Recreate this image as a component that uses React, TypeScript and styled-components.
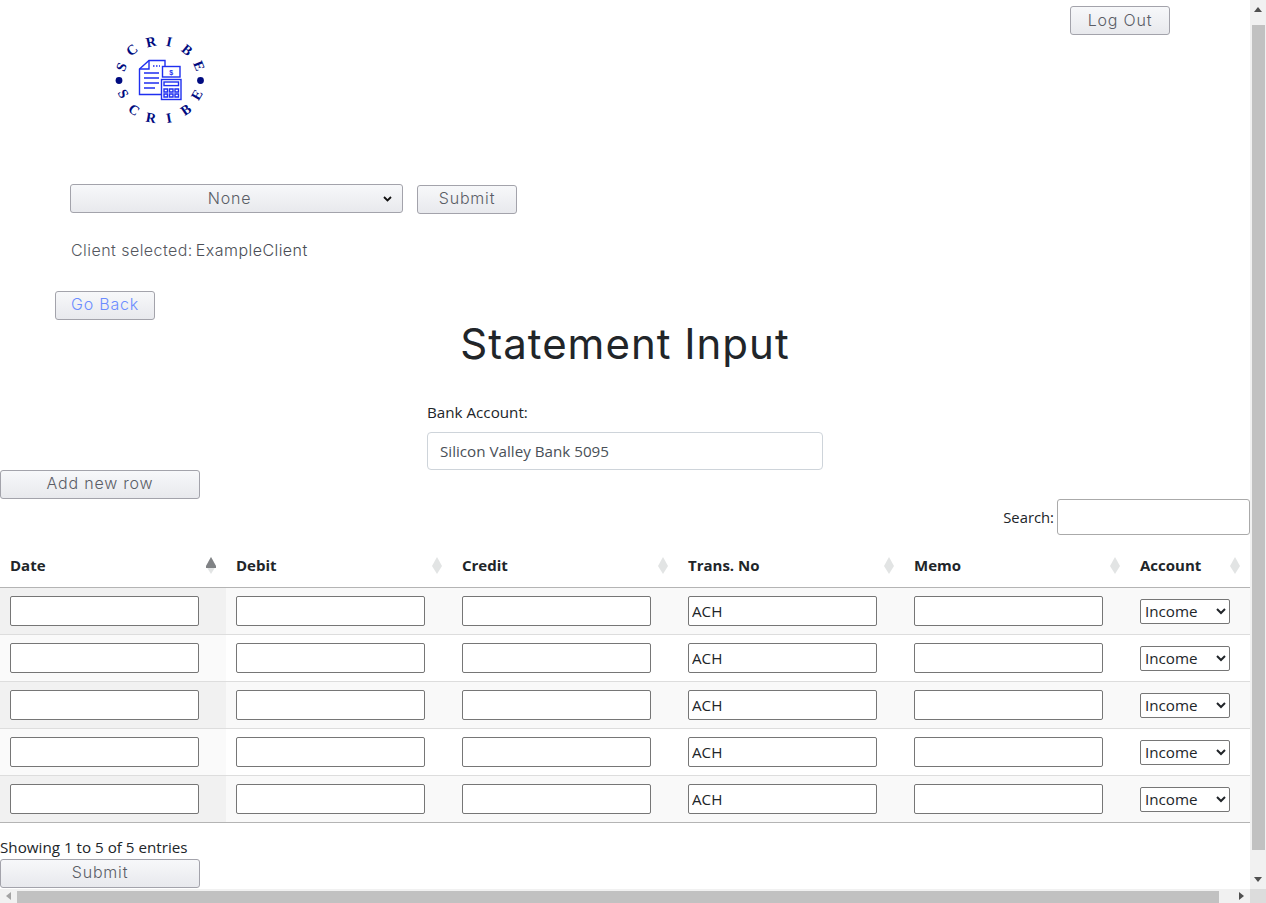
import { FC } from 'react';
import styled, { createGlobalStyle } from 'styled-components';

const columns = ['Date', 'Debit', 'Credit', 'Trans. No', 'Memo', 'Account'];
const rows = [1, 2, 3, 4, 5];

const topLetters = [
  { c: 'S', x: 21.5, y: 37, r: -68 },
  { c: 'C', x: 32, y: 20, r: -40 },
  { c: 'R', x: 51, y: 12, r: -12 },
  { c: 'I', x: 69, y: 12, r: 12 },
  { c: 'B', x: 87, y: 20, r: 40 },
  { c: 'E', x: 99, y: 36, r: 68 },
];
const bottomLetters = [
  { c: 'S', x: 23, y: 64, r: 60 },
  { c: 'C', x: 34, y: 80, r: 35 },
  { c: 'R', x: 51, y: 88, r: 10 },
  { c: 'I', x: 69, y: 88, r: -10 },
  { c: 'B', x: 86, y: 80, r: -35 },
  { c: 'E', x: 97, y: 65, r: -60 },
];

const chevron =
  "url(\"data:image/svg+xml,%3Csvg xmlns='http://www.w3.org/2000/svg' viewBox='0 0 9 6'%3E%3Cpath d='M1 1l3.5 3.5L8 1' fill='none' stroke='%23111' stroke-width='1.8'/%3E%3C/svg%3E\")";

const Logo: FC = () => (
  <LogoSvg viewBox="0 0 120 100">
    {[...topLetters, ...bottomLetters].map((l, i) => (
      <LogoLetter
        key={i}
        x={l.x}
        y={l.y}
        textAnchor="middle"
        dominantBaseline="central"
        transform={`rotate(${l.r} ${l.x} ${l.y})`}
      >
        {l.c}
      </LogoLetter>
    ))}
    <circle cx="19" cy="50.5" r="3.4" fill="#000b80" />
    <circle cx="100.5" cy="50.5" r="3.4" fill="#000b80" />
    <g fill="none" stroke="#1f2ff0" strokeWidth="1.4">
      <path d="M61 64.5H39.5V39L49 30.5H65V36" />
      <path d="M49 30.5V39H39.5" />
      <path d="M44 43H59M44 48H59M44 53H59M44 58H55" />
      <path d="M53 36H60" strokeDasharray="1.5 1.5" />
      <rect x="62.5" y="36.5" width="17.5" height="10.5" />
      <rect x="61.5" y="49.5" width="19.5" height="20" fill="#fff" />
      <rect x="64" y="52" width="14.5" height="3.6" />
      <path d="M64 59h3.5v3h-3.5zM69.5 59h3.5v3h-3.5zM75 59h3.5v3h-3.5zM64 64h3.5v3h-3.5zM69.5 64h3.5v3h-3.5zM75 64h3.5v3h-3.5z" />
    </g>
    <BillSign x="71.2" y="42" textAnchor="middle" dominantBaseline="central">
      $
    </BillSign>
  </LogoSvg>
);

const SortIcon: FC<{ active?: boolean }> = ({ active }) => (
  <SortSvg viewBox="0 0 10 17">
    <path d="M5 0L10 9L5 17L0 9Z" fill="#e2e4e4" />
    {active && <path d="M5 0L10 9V11H0V9Z" fill="#808285" />}
  </SortSvg>
);

export default function App() {
  return (
    <Page>
      <GlobalStyle />
      <Header>
        <Logo />
        <LogoutButton>Log Out</LogoutButton>
      </Header>

      <ClientForm>
        <ClientSelect>
          <option>None</option>
        </ClientSelect>
        <SmallButton>Submit</SmallButton>
      </ClientForm>
      <ClientLine>
        <span>Client selected:</span>
        <ClientName>ExampleClient</ClientName>
      </ClientLine>

      <BackButton>Go Back</BackButton>
      <Title>Statement Input</Title>

      <BankBlock>
        <BankLabel>Bank Account:</BankLabel>
        <BankInput defaultValue="Silicon Valley Bank 5095" />
      </BankBlock>

      <WideButton>Add new row</WideButton>

      <SearchRow>
        Search:
        <SearchInput />
      </SearchRow>

      <Table>
        <thead>
          <tr>
            {columns.map((c, i) => (
              <HeadCell key={c} $wide={i < 5}>
                {c}
                <SortIcon active={i === 0} />
              </HeadCell>
            ))}
          </tr>
        </thead>
        <tbody>
          {rows.map((r) => (
            <Row key={r} $odd={r % 2 === 1}>
              <DateCell $odd={r % 2 === 1}>
                <CellInput />
              </DateCell>
              <Cell>
                <CellInput />
              </Cell>
              <Cell>
                <CellInput />
              </Cell>
              <Cell>
                <CellInput defaultValue="ACH" />
              </Cell>
              <Cell>
                <CellInput />
              </Cell>
              <Cell>
                <AccountSelect>
                  <option>Income</option>
                </AccountSelect>
              </Cell>
            </Row>
          ))}
        </tbody>
      </Table>

      <TableInfo>Showing 1 to 5 of 5 entries</TableInfo>
      <WideButton>Submit</WideButton>

      <VerticalBar>
        <ArrowUp />
        <VerticalThumb />
        <ArrowDown />
      </VerticalBar>
      <HorizontalBar>
        <ArrowLeft />
        <HorizontalThumb />
        <ArrowRight />
        <Corner />
      </HorizontalBar>
    </Page>
  );
}

const GlobalStyle = createGlobalStyle`
  html, body {
    margin: 0;
    padding: 0;
    height: 100%;
    overflow: hidden;
    background: #fff;
  }
  body {
    font-family: "Open Sans", "Noto Sans", sans-serif;
    font-size: 15.2px;
    color: #212529;
  }
`;

const Page = styled.div`
  width: 1250px;
  height: 903px;
  overflow: hidden;
`;

const Header = styled.div`
  display: flex;
  justify-content: space-between;
  align-items: flex-start;
  height: 184px;
  padding: 0 80px 0 100px;
  box-sizing: border-box;
`;

const LogoSvg = styled.svg`
  width: 120px;
  height: 100px;
  margin-top: 30px;
  flex: 0 0 auto;
`;

const LogoLetter = styled.text`
  font-family: "Liberation Serif", serif;
  font-weight: 700;
  font-size: 14px;
  fill: #000b80;
`;

const BillSign = styled.text`
  font-family: "Liberation Sans", sans-serif;
  font-weight: 700;
  font-size: 7px;
  fill: #1f2ff0;
`;

const Button = styled.button`
  width: 100px;
  height: 29px;
  padding: 0 0 3px;
  box-sizing: border-box;
  border: 1px solid #a3a3ab;
  border-radius: 3px;
  background: linear-gradient(#f7f8fa, #e8e9ed);
  font-family: Inter, sans-serif;
  font-weight: 300;
  font-size: 16px;
  letter-spacing: 0.8px;
  color: #5a5d66;
`;

const LogoutButton = styled(Button)`
  margin-top: 6px;
  padding-bottom: 2px;
`;

const ClientForm = styled.div`
  display: flex;
  align-items: flex-start;
  gap: 14px;
  padding-left: 70px;
`;

const ClientSelect = styled.select`
  appearance: none;
  width: 333px;
  height: 29px;
  box-sizing: border-box;
  padding: 0 18px 2px 4px;
  border: 1px solid #a3a3ab;
  border-radius: 3px;
  background: ${chevron} no-repeat right 10px center / 9px 6px,
    linear-gradient(#f7f8fa, #e8e9ed);
  font-family: Inter, sans-serif;
  font-weight: 300;
  font-size: 16px;
  letter-spacing: 0.8px;
  color: #5a5d66;
  text-align: center;
`;

const SmallButton = styled(Button)`
  margin-top: 1px;
`;

const ClientLine = styled.div`
  display: flex;
  gap: 3px;
  margin: 26px 0 0 71px;
  height: 22px;
  line-height: 20px;
  font-family: Inter, sans-serif;
  font-weight: 300;
  font-size: 16px;
  letter-spacing: 0.45px;
  color: #55585f;
`;

const ClientName = styled.span`
  color: #4a4d55;
`;

const BackButton = styled(Button)`
  display: block;
  margin: 29px 0 0 55px;
  color: #6c8cff;
`;

const Title = styled.h1`
  margin: 0;
  height: 49px;
  line-height: 47px;
  text-align: center;
  font-family: Inter, sans-serif;
  font-weight: 400;
  font-size: 42px;
  letter-spacing: 1px;
  color: #212529;
`;

const BankBlock = styled.div`
  width: 396px;
  margin: 33px 0 0 427px;
`;

const BankLabel = styled.div`
  height: 22px;
  line-height: 20px;
  margin-bottom: 8px;
`;

const BankInput = styled.input`
  display: block;
  width: 100%;
  height: 38px;
  box-sizing: border-box;
  padding: 0 12px;
  border: 1px solid #ced4da;
  border-radius: 4px;
  font-family: "Open Sans", sans-serif;
  font-size: 15.2px;
  color: #495057;
`;

const WideButton = styled(Button)`
  display: block;
  width: 200px;
`;

const SearchRow = styled.div`
  display: flex;
  justify-content: flex-end;
  align-items: center;
  height: 36px;
  gap: 3px;
  font-size: 14.8px;
`;

const SearchInput = styled.input`
  width: 193px;
  height: 36px;
  box-sizing: border-box;
  border: 1px solid #aaa;
  border-radius: 3px;
`;

const Table = styled.table`
  width: 1250px;
  margin-top: 10px;
  table-layout: fixed;
  border-collapse: separate;
  border-spacing: 0;
`;

const HeadCell = styled.th<{ $wide: boolean }>`
  position: relative;
  width: ${(p) => (p.$wide ? '226px' : 'auto')};
  height: 43px;
  padding: 0 10px 2px;
  box-sizing: border-box;
  border-bottom: 1px solid #b4b4b4;
  text-align: left;
  font-weight: 700;
  font-size: 15px;
`;

const SortSvg = styled.svg`
  position: absolute;
  right: 10px;
  top: 12px;
  width: 10px;
  height: 17px;
`;

const Row = styled.tr<{ $odd: boolean }>`
  background: ${(p) => (p.$odd ? '#f9f9f9' : '#fff')};
`;

const Cell = styled.td`
  height: 47px;
  padding: 0 10px;
  box-sizing: border-box;
  border-bottom: 1px solid #ddd;
  tr:last-child & {
    border-bottom-color: #b4b4b4;
  }
`;

const DateCell = styled(Cell)<{ $odd: boolean }>`
  background: ${(p) => (p.$odd ? '#f1f1f1' : '#fafafa')};
`;

const CellInput = styled.input`
  display: block;
  width: 189px;
  height: 30px;
  box-sizing: border-box;
  padding: 0 3px;
  border: 1px solid #767676;
  border-radius: 2px;
  font-family: "Open Sans", sans-serif;
  font-size: 15.2px;
  color: #212529;
`;

const AccountSelect = styled.select`
  display: block;
  width: 90px;
  height: 25px;
  box-sizing: border-box;
  border: 1px solid #767676;
  border-radius: 2px;
  background: #fff;
  font-family: "Open Sans", sans-serif;
  font-size: 15.2px;
  color: #212529;
`;

const TableInfo = styled.div`
  height: 23px;
  line-height: 22px;
  margin-top: 13px;
`;

const VerticalBar = styled.div`
  position: fixed;
  top: 0;
  right: 0;
  bottom: 14px;
  width: 16px;
  background: #f1f1f1;
  display: flex;
  flex-direction: column;
  align-items: flex-end;
`;

const VerticalThumb = styled.div`
  width: 13px;
  height: 825px;
  margin-right: 1px;
  background: #c1c1c1;
`;

const ArrowUp = styled.div`
  align-self: center;
  width: 0;
  height: 0;
  margin: 7px 0 13px;
  border-left: 4px solid transparent;
  border-right: 4px solid transparent;
  border-bottom: 5px solid #505050;
`;

const ArrowDown = styled.div`
  align-self: center;
  width: 0;
  height: 0;
  margin: auto 0 7px;
  border-left: 4px solid transparent;
  border-right: 4px solid transparent;
  border-top: 5px solid #505050;
`;

const HorizontalBar = styled.div`
  position: fixed;
  left: 0;
  right: 0;
  bottom: 0;
  height: 14px;
  background: #f1f1f1;
  display: flex;
  align-items: flex-end;
`;

const HorizontalThumb = styled.div`
  width: 1202px;
  height: 12px;
  background: #c1c1c1;
`;

const ArrowLeft = styled.div`
  align-self: center;
  width: 0;
  height: 0;
  margin: 0 6px;
  border-top: 4px solid transparent;
  border-bottom: 4px solid transparent;
  border-right: 5px solid #a3a3a3;
`;

const ArrowRight = styled.div`
  align-self: center;
  width: 0;
  height: 0;
  margin: 0 0 0 20px;
  border-top: 4px solid transparent;
  border-bottom: 4px solid transparent;
  border-left: 5px solid #505050;
`;

const Corner = styled.div`
  width: 16px;
  height: 14px;
  margin-left: 6px;
  background: #dcdcdc;
`;
